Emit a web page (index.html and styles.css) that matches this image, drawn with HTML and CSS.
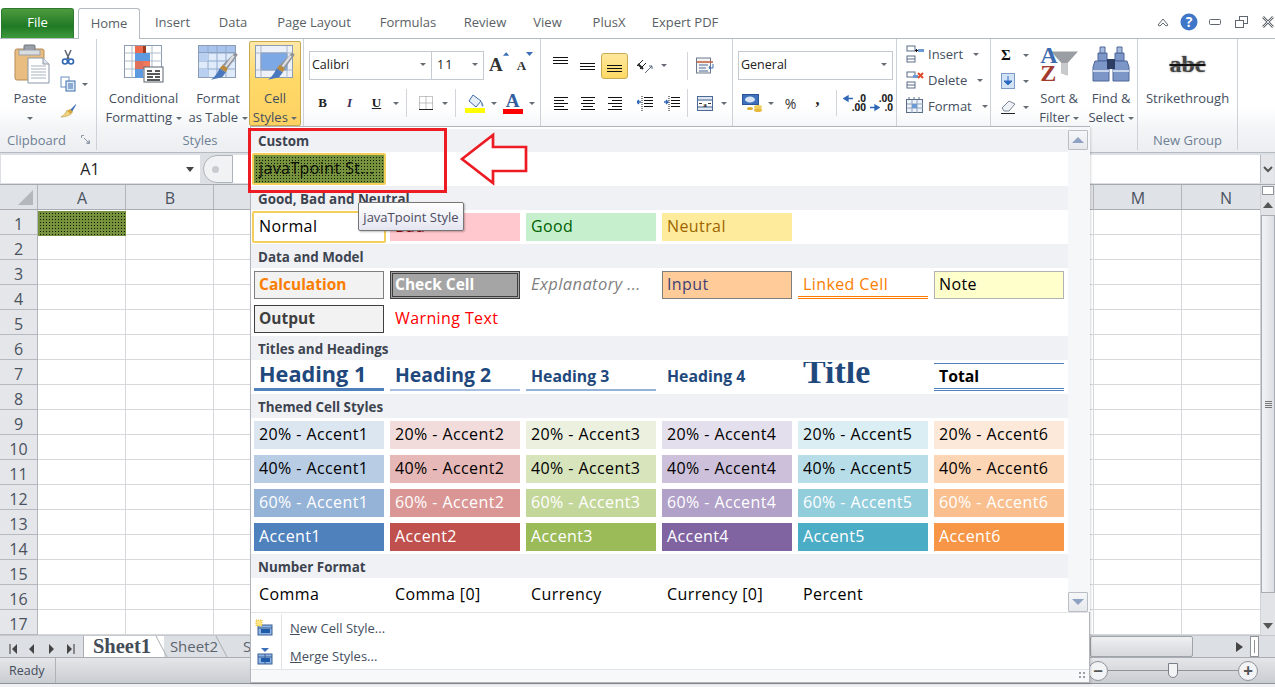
FILE: index.html
```html
<!DOCTYPE html>
<html lang="en">
<head>
<meta charset="utf-8">
<title>Cell Styles</title>
<link rel="stylesheet" href="styles.css">
</head>
<body>
<svg class="defs" width="0" height="0" aria-hidden="true">
  <symbol id="brush" viewBox="0 0 24 24">
    <path d="M21 1l2 2-8 11-4-3z" fill="#8f949b"/>
    <path d="M19 3l1.5 1.5L14 13l-1.5-1z" fill="#d9dce0"/>
    <path d="M11 11l4 3-1.5 3-5-3z" fill="#b98a3c"/>
    <path d="M8.500 14l5 3-3 4-9 2c3-2 5-5 7-9z" fill="#4a78bd"/>
  </symbol>
  <symbol id="sml-grid" viewBox="0 0 18 18">
    <rect x="1" y="1" width="8" height="5" fill="#fff" stroke="#5b6d85"/>
    <rect x="1" y="11" width="8" height="6" fill="#fff" stroke="#5b6d85"/>
    <path d="M1 14h8" stroke="#5b6d85"/>
  </symbol>
</svg>

<div class="tabs">
  <div class="file-tab">File</div>
  <div class="tab tab-on">Home</div>
  <div class="tab t-insert">Insert</div>
  <div class="tab t-data">Data</div>
  <div class="tab t-page">Page Layout</div>
  <div class="tab t-form">Formulas</div>
  <div class="tab t-rev">Review</div>
  <div class="tab t-view">View</div>
  <div class="tab t-plus">PlusX</div>
  <div class="tab t-pdf">Expert PDF</div>
  <div class="win-ctl">
    <svg class="wc-a" width="14" height="12" viewBox="0 0 14 12"><path d="M2 9l5-6 5 6-2 1-3-3-3 3z" fill="#fff" stroke="#5f6670"/></svg>
    <svg class="wc-b" width="18" height="18" viewBox="0 0 18 18"><circle cx="9" cy="9" r="8.500" fill="#3f76c8"/><text x="9" y="14" text-anchor="middle" class="help-q">?</text></svg>
    <svg class="wc-c" width="13" height="8" viewBox="0 0 13 8"><rect x=".5" y="1.500" width="11" height="5" rx="1" fill="#fff" stroke="#5f6670"/></svg>
    <svg class="wc-d" width="13" height="13" viewBox="0 0 13 13"><rect x="4.500" y=".5" width="8" height="7" fill="#fff" stroke="#5f6670"/><rect x=".5" y="4.500" width="8" height="7" fill="#fff" stroke="#5f6670"/></svg>
    <svg class="wc-e" width="12" height="12" viewBox="0 0 12 12"><path d="M1 1l10 10M11 1L1 11" stroke="#5f6670" stroke-width="2.500"/><path d="M1 1l10 10M11 1L1 11" stroke="#fff" stroke-width=".8"/></svg>
  </div>
</div>

<div class="ribbon">
  <section class="group g-clip">
    <div class="group-body clip-body">
      <div class="big-btn paste">
        <svg class="big-ico" width="36" height="40" viewBox="0 0 36 40">
          <rect x="1" y="5" width="29" height="31" rx="2" fill="#e9bd7f" stroke="#b58b55"/>
          <rect x="10" y="1" width="11" height="8" rx="1" fill="#9aa0a8" stroke="#6d737b"/>
          <rect x="5" y="6" width="21" height="5" fill="#d9dde2" stroke="#9aa0a8"/>
          <path d="M14 14h15l6 6v19H14z" fill="#fff" stroke="#8b97a6"/>
          <path d="M29 14v6h6" fill="#dfe5ec" stroke="#8b97a6"/>
          <path d="M17 22h15M17 25h15M17 28h15M17 31h15M17 34h15" stroke="#a9b3bf"/>
        </svg>
        <div class="big-lbl">Paste</div>
        <div class="big-lbl"><i class="ar"></i></div>
      </div>
      <div class="clip-tools">
        <svg width="16" height="16" viewBox="0 0 16 16"><path d="M5 1l4 9M11 1L7 10" stroke="#5c6470" stroke-width="1.500"/><circle cx="5" cy="12.500" r="2.500" fill="none" stroke="#2f67b5" stroke-width="1.600"/><circle cx="11" cy="12.500" r="2.500" fill="none" stroke="#2f67b5" stroke-width="1.600"/></svg>
        <div class="clip-row"><svg width="16" height="16" viewBox="0 0 16 16"><rect x="1" y="1" width="8" height="10" fill="#fff" stroke="#6d8fbf"/><rect x="6" y="5" width="9" height="10" fill="#dce9f7" stroke="#3d6cab"/><path d="M8 8h5M8 10h5M8 12h5" stroke="#3d6cab"/></svg><i class="ar"></i></div>
        <svg width="17" height="15" viewBox="0 0 17 15"><path d="M16 1l-6 6 2 2 4-7z" fill="#3f6fb5"/><path d="M10 6l3 3-2 2-4-3z" fill="#d8a53a"/><path d="M7 7l4 4c-3 2-6 3-10 3 3-2 5-4 6-7z" fill="#f0d27a" stroke="#a98a3a" stroke-width=".5"/></svg>
      </div>
    </div>
    <div class="group-label clip-label">Clipboard<svg class="launch" width="9" height="9" viewBox="0 0 9 9"><path d="M.5 3V.5H3M8.500 6v2.500H6M3 3l5 5M5 8h3V5" fill="none" stroke="#8d98a6"/></svg></div>
  </section>

  <section class="group g-styles">
    <div class="group-body styles-body">
      <div class="big-btn cf">
        <svg class="big-ico" width="40" height="38" viewBox="0 0 40 38">
          <rect x=".5" y=".5" width="37" height="32" fill="#fff" stroke="#8c9cb3"/>
          <path d="M8 1v32M19 1v32M28 1v32M1 8h37M1 16h37M1 24h37" stroke="#aebbcb"/>
          <rect x="11" y="1" width="8" height="8" fill="#ee6a4c"/><rect x="19" y="1" width="3" height="8" fill="#9c3b22"/>
          <rect x="11" y="8" width="15" height="8" fill="#5e9ae0"/><rect x="11" y="16" width="8" height="8" fill="#5e9ae0"/>
          <rect x="11" y="16" width="15" height="8" fill="#ee6a4c" opacity=".9"/><rect x="11" y="24" width="8" height="9" fill="#5e9ae0"/>
          <rect x="20" y="22" width="19" height="15" fill="#fff" stroke="#5b6472"/>
          <path d="M23 26h5M31 26h5M23 29h13M23 32h6M31 32h5M23 35h13" stroke="#222" stroke-width="1.300"/>
        </svg>
        <div class="big-lbl">Conditional</div>
        <div class="big-lbl">Formatting <i class="ar"></i></div>
      </div>
      <div class="big-btn fat">
        <svg class="big-ico" width="40" height="38" viewBox="0 0 40 38">
          <rect x=".5" y=".5" width="37" height="32" fill="#dfeafb" stroke="#8c9cb3"/>
          <rect x=".5" y=".5" width="37" height="7" fill="#a9c4ec" stroke="#8c9cb3"/>
          <path d="M10 1v32M19 1v32M28 1v32M1 8h37M1 16h37M1 24h37" stroke="#8fa9cb"/>
          <rect x="1" y="8" width="9" height="8" fill="#b9d0f0"/><rect x="1" y="24" width="9" height="8" fill="#b9d0f0"/>
          <use href="#brush" x="11" y="6" width="30" height="30"/>
        </svg>
        <div class="big-lbl">Format</div>
        <div class="big-lbl">as Table <i class="ar"></i></div>
      </div>
      <div class="big-btn cs">
        <svg class="big-ico" width="40" height="38" viewBox="0 0 40 38">
          <rect x=".5" y=".5" width="37" height="32" fill="#eef2f8" stroke="#8c9cb3"/>
          <rect x="6" y="8" width="26" height="17" fill="#7da8e6" stroke="#4f7fc2"/>
          <path d="M6 1v32M32 1v32M1 8h37M1 25h37" stroke="#a9b7c9"/>
          <use href="#brush" x="11" y="6" width="30" height="30"/>
        </svg>
        <div class="big-lbl">Cell</div>
        <div class="big-lbl">Styles <i class="ar"></i></div>
      </div>
    </div>
    <div class="group-label">Styles</div>
  </section>

  <section class="group g-font">
    <div class="group-body col-body">
      <div class="row row-top">
        <div class="combo c-font">Calibri<i class="ar"></i></div>
        <div class="combo c-size">11<i class="ar"></i></div>
      </div>
      <div class="row row-bot">
        <div class="ib"><b class="sf">B</b></div>
        <div class="ib"><i class="sf it">I</i></div>
        <div class="ib"><u class="sf ul">U</u></div>
        <div class="arw"><i class="ar"></i></div>
        <span class="sep"></span>
        <div class="ib"><svg width="14" height="14" viewBox="0 0 14 14"><path d="M.5.5h13v13H.5zM7 .5v13M.5 7h13" fill="none" stroke="#8a8a8a" stroke-dasharray="1 1"/><path d="M0 13.500h14" stroke="#222"/></svg></div>
        <div class="arw"><i class="ar"></i></div>
        <span class="sep"></span>
        <div class="ib"><svg width="20" height="19" viewBox="0 0 20 19"><path d="M8 1l8 6-5 6-7-6z" fill="#e8eef7" stroke="#3e6ba8"/><path d="M16 7c2 2 3 4 2 6-2-1-2-4-2-6z" fill="#6f8fc0"/><rect y="14" width="20" height="5" fill="#ffff00"/></svg></div>
        <div class="arw"><i class="ar"></i></div>
        <div class="ib col-a"><b class="sf a-blue">A</b><span class="bar-red"></span></div>
        <div class="arw"><i class="ar"></i></div>
      </div>
      <div class="grow-btns">
        <div class="grow"><b class="sf grow-b">A</b><svg width="7" height="4" viewBox="0 0 7 4"><path d="M0 4l3.500-4L7 4z" fill="#3a6fb5"/></svg></div>
        <div class="grow"><b class="sf grow-s">A</b><svg width="7" height="4" viewBox="0 0 7 4"><path d="M0 0l3.500 4L7 0z" fill="#3a6fb5"/></svg></div>
      </div>
    </div>
    <div class="group-label"></div>
  </section>

  <section class="group g-align">
    <div class="group-body col-body">
      <div class="row row-top2">
        <div class="ib al-top"><span class="lines l-s"></span></div>
        <div class="ib al-mid"><span class="lines l-s"></span></div>
        <div class="ib ib-on al-bot"><span class="lines l-s"></span></div>
        <div class="ib m3"><svg width="20" height="20" viewBox="0 0 20 20"><g fill="none" stroke="#222"><path d="M2 10l6-6M5 13l6-6"/><path d="M3 8l5 5" stroke-width="2"/></g><path d="M10 17l7-7M14 10h3v3" fill="none" stroke="#5a6a80"/></svg></div>
        <div class="arw"><i class="ar"></i></div>
        <span class="sep s-r1"></span>
        <div class="ib"><svg width="18" height="17" viewBox="0 0 18 17"><rect x=".5" y="1" width="14" height="15" fill="#f3f3f3" stroke="#6d7a8c"/><path d="M1 5h16" stroke="#c05a34" stroke-width="1.500"/><path d="M3 8h9M3 11h7M3 14h9" stroke="#4d6a96"/><path d="M17 7v4h-4m1-2l-1 2 2 1" fill="none" stroke="#3a6fb5"/></svg></div>
      </div>
      <div class="row row-bot2">
        <div class="ib"><span class="lines l-left"></span></div>
        <div class="ib"><span class="lines l-center"></span></div>
        <div class="ib"><span class="lines l-right"></span></div>
        <div class="ib m3"><svg width="16" height="15" viewBox="0 0 16 15"><path d="M7 1.500h9M7 4.500h9M7 7.500h9M7 10.500h9" stroke="#111"/><path d="M5 .0v15" stroke="#111" stroke-dasharray="1 1"/><path d="M4 6H0m2-2L0 6l2 2" fill="none" stroke="#2f67b5" stroke-width="1.400"/></svg></div>
        <div class="ib"><svg width="16" height="15" viewBox="0 0 16 15"><path d="M7 1.500h9M7 4.500h9M7 7.500h9M7 10.500h9" stroke="#111"/><path d="M5 .0v15" stroke="#111" stroke-dasharray="1 1"/><path d="M0 6h4M2 4l2 2-2 2" fill="none" stroke="#2f67b5" stroke-width="1.400"/></svg></div>
        <span class="sep s-r2"></span>
        <div class="ib"><svg width="16" height="15" viewBox="0 0 16 15"><rect x=".5" y=".5" width="15" height="14" fill="#dfe7f2" stroke="#4d6a96"/><path d="M1 4h14M1 11h14" stroke="#4d6a96"/><rect x="1" y="5" width="14" height="5" fill="#fff"/><text x="8" y="10.500" text-anchor="middle" class="merge-t">a</text><path d="M2 7.500h3M14 7.500h-3" stroke="#333"/></svg></div>
        <div class="arw"><i class="ar"></i></div>
      </div>
    </div>
    <div class="group-label"></div>
  </section>

  <section class="group g-num">
    <div class="group-body col-body">
      <div class="row row-top">
        <div class="combo c-num">General<i class="ar"></i></div>
      </div>
      <div class="row row-bot num-row">
        <div class="ib w28"><svg width="20" height="18" viewBox="0 0 20 18"><rect x=".5" y=".5" width="16" height="10" fill="#3f70bc" stroke="#2c5597"/><ellipse cx="8" cy="5.500" rx="5" ry="3" fill="#d6e4f6"/><ellipse cx="16" cy="16" rx="4" ry="2" fill="#e7b83c"/><ellipse cx="16" cy="13" rx="4" ry="2" fill="#f0cc58"/><ellipse cx="8" cy="14.500" rx="3" ry="1.500" fill="#dcae34"/></svg></div>
        <div class="arw a10"><i class="ar"></i></div>
        <div class="ib num-first"><span class="sym">%</span></div>
        <div class="ib"><b class="sym comma">,</b></div>
        <span class="sep s-n"></span>
        <div class="ib"><span class="dec"><svg width="10" height="9" viewBox="0 0 10 9"><path d="M10 4.500H3M5 2L1 4.500 5 7z" fill="#2f67b5" stroke="#2f67b5" stroke-width="1.300"/></svg><b>.0</b><b class="dec-w">.00</b></span></div>
        <div class="ib"><span class="dec"><b class="dec-w">.00</b><svg width="10" height="9" viewBox="0 0 10 9"><path d="M0 4.500h7M5 2l4 2.500L5 7z" fill="#2f67b5" stroke="#2f67b5" stroke-width="1.300"/></svg><b>.0</b></span></div>
      </div>
    </div>
    <div class="group-label"></div>
  </section>

  <section class="group g-cells">
    <div class="group-body cells-body">
      <div class="cell-cmd">
        <svg width="18" height="18" viewBox="0 0 18 18"><use href="#sml-grid"/><rect x="12" y="4" width="6" height="3" fill="#6c9ad4"/><path d="M9 5.500h3M10.500 4v3" stroke="#111"/></svg>
        <span>Insert</span><i class="ar"></i>
      </div>
      <div class="cell-cmd">
        <svg width="18" height="18" viewBox="0 0 18 18"><use href="#sml-grid"/><rect x="7" y="4" width="5" height="3" fill="#6c9ad4"/><path d="M12 2l5 5M17 2l-5 5" stroke="#e04a2a" stroke-width="2"/></svg>
        <span>Delete</span><i class="ar"></i>
      </div>
      <div class="cell-cmd">
        <svg width="18" height="18" viewBox="0 0 18 18"><rect x=".5" y="2.500" width="16" height="13" fill="#eef3fa" stroke="#5b6d85"/><path d="M6 3v13M11 3v13M1 7h16M1 11h16" stroke="#8da2bd"/><rect x="6" y="7" width="5" height="4" fill="#6c9ad4"/><path d="M3 0v3M8 0v3M13 0v3" stroke="#5b6d85"/></svg>
        <span>Format</span><i class="ar"></i>
      </div>
    </div>
    <div class="group-label"></div>
  </section>

  <section class="group g-edit">
    <div class="group-body edit-body">
      <div class="edit-tools">
        <div class="edit-row"><b class="sigma">Σ</b><i class="ar"></i></div>
        <div class="edit-row"><svg width="14" height="16" viewBox="0 0 14 16"><rect x=".5" y=".5" width="13" height="15" fill="#d3e3f6" stroke="#7d9cc6"/><path d="M7 3v8M3 8l4 4 4-4z" fill="#2f6bc0" stroke="#2f6bc0"/></svg><i class="ar"></i></div>
        <div class="edit-row"><svg width="15" height="14" viewBox="0 0 15 14"><path d="M1 8l7-7 6 3-6 7H3z" fill="#eef2f6" stroke="#7b8794"/><path d="M0 13.500h14" stroke="#222"/></svg><i class="ar"></i></div>
      </div>
      <div class="big-btn sort">
        <div class="sort-ico">
          <svg class="funnel" width="27" height="26" viewBox="0 0 26 24"><path d="M0 0h26L16 11v12l-6-2V11z" fill="#9a9da1"/><path d="M10 11h6v12l-6-2z" fill="#c8cacc"/></svg>
          <b class="az-a">A</b><b class="az-z">Z</b>
        </div>
        <div class="big-lbl">Sort &amp;</div>
        <div class="big-lbl">Filter <i class="ar"></i></div>
      </div>
      <div class="big-btn find">
        <svg class="big-ico" width="38" height="38" viewBox="0 0 38 38">
          <g fill="#7c96c8" stroke="#4e6797">
            <path d="M6 8h9v8H6zM23 8h9v8h-9z"/>
            <path d="M3 16h14v20H1V22zM21 16h14l2 6v14H21z"/>
          </g>
          <path d="M8 2h5v6H8zM25 2h5v6h-5z" fill="#a7bbe0" stroke="#4e6797"/>
          <rect x="15" y="14" width="8" height="10" fill="#2d3d63"/>
          <path d="M1 26h16M21 26h16" stroke="#c9d6ec" stroke-width="2"/>
        </svg>
        <div class="big-lbl">Find &amp;</div>
        <div class="big-lbl">Select <i class="ar"></i></div>
      </div>
    </div>
    <div class="group-label"></div>
  </section>

  <section class="group g-new">
    <div class="group-body new-body">
      <div class="abc">abc</div>
      <div class="big-lbl">Strikethrough</div>
    </div>
    <div class="group-label">New Group</div>
  </section>
</div>

<div class="formula">
  <div class="namebox">A1<i class="ar ar-big"></i></div>
  <div class="fx-pill"><span></span></div>
  <div class="fx-input"></div>
  <div class="fx-exp"><svg width="10" height="7" viewBox="0 0 10 7"><path d="M1 1l4 4 4-4" fill="none" stroke="#555" stroke-width="2"/></svg></div>
</div>

<div class="sheet">
  <div class="sheet-main">
    <div class="col-heads">
      <div class="corner"><span></span></div>
      <div class="ch">A</div><div class="ch">B</div><div class="ch">C</div><div class="ch">D</div><div class="ch">E</div><div class="ch">F</div><div class="ch">G</div><div class="ch">H</div><div class="ch">I</div><div class="ch">J</div><div class="ch">K</div><div class="ch">L</div><div class="ch">M</div><div class="ch">N</div>
    </div>
    <div class="grid-wrap">
      <div class="row-heads">
        <div>1</div><div>2</div><div>3</div><div>4</div><div>5</div><div>6</div><div>7</div><div>8</div><div>9</div><div>10</div><div>11</div><div>12</div><div>13</div><div>14</div><div>15</div><div>16</div><div>17</div>
      </div>
      <div class="cells"><div class="a1 dots"></div></div>
    </div>
  </div>
  <div class="vscroll">
    <div class="split-v"></div>
    <div class="vs-up"><i></i></div>
    <div class="vs-thumb"><span></span></div>
    <div class="vs-down"><i></i></div>
  </div>
</div>

<div class="sheetbar">
  <div class="nav">
    <svg width="70" height="12" viewBox="0 0 70 12"><path d="M1 1v10" stroke="#333"/><path d="M8 1v10L3 6zM25 1v10l-5-5zM40 1v10l5-5zM58 1v10l5-5z" fill="#444"/><path d="M65 1v10" stroke="#333"/></svg>
  </div>
  <div class="stab stab-on">Sheet1</div>
  <div class="stab">Sheet2</div>
  <div class="stab stab-3">Sheet3</div>
  <div class="hs-space"></div>
  <div class="hs-thumb"></div>
  <div class="hs-right"><i></i></div>
  <div class="hs-split"><span></span></div>
</div>

<div class="status">
  <div class="ready">Ready</div>
  <div class="zoom">
    <span class="zbtn">&minus;</span>
    <div class="ztrack"><span class="zthumb"></span></div>
    <span class="zbtn">+</span>
  </div>
</div>
<div class="win-bottom"></div>

<div class="menu">
  <div class="menu-top">
    <div class="gallery">
      <div class="sec-head sec-first">Custom</div>
      <div class="sec"><div class="st st-sel dots">javaTpoint St...</div></div>

      <div class="sec-head">Good, Bad and Neutral</div>
      <div class="sec">
        <div class="st st-sel st-normal">Normal</div>
        <div class="st bad">Bad</div>
        <div class="st good">Good</div>
        <div class="st neutral">Neutral</div>
      </div>

      <div class="sec-head">Data and Model</div>
      <div class="sec">
        <div class="st calc">Calculation</div>
        <div class="st check">Check Cell</div>
        <div class="st expl">Explanatory ...</div>
        <div class="st input">Input</div>
        <div class="st linked">Linked Cell</div>
        <div class="st note">Note</div>
        <div class="st output">Output</div>
        <div class="st warn">Warning Text</div>
      </div>

      <div class="sec-head">Titles and Headings</div>
      <div class="sec">
        <div class="st h1">Heading 1</div>
        <div class="st h2">Heading 2</div>
        <div class="st h3">Heading 3</div>
        <div class="st h4">Heading 4</div>
        <div class="st title">Title</div>
        <div class="st total">Total</div>
      </div>

      <div class="sec-head">Themed Cell Styles</div>
      <div class="sec">
        <div class="st a21">20% - Accent1</div><div class="st a22">20% - Accent2</div><div class="st a23">20% - Accent3</div><div class="st a24">20% - Accent4</div><div class="st a25">20% - Accent5</div><div class="st a26">20% - Accent6</div>
        <div class="st a41">40% - Accent1</div><div class="st a42">40% - Accent2</div><div class="st a43">40% - Accent3</div><div class="st a44">40% - Accent4</div><div class="st a45">40% - Accent5</div><div class="st a46">40% - Accent6</div>
        <div class="st a61">60% - Accent1</div><div class="st a62">60% - Accent2</div><div class="st a63">60% - Accent3</div><div class="st a64">60% - Accent4</div><div class="st a65">60% - Accent5</div><div class="st a66">60% - Accent6</div>
        <div class="st ac1">Accent1</div><div class="st ac2">Accent2</div><div class="st ac3">Accent3</div><div class="st ac4">Accent4</div><div class="st ac5">Accent5</div><div class="st ac6">Accent6</div>
      </div>

      <div class="sec-head">Number Format</div>
      <div class="sec">
        <div class="st">Comma</div>
        <div class="st">Comma [0]</div>
        <div class="st">Currency</div>
        <div class="st">Currency [0]</div>
        <div class="st">Percent</div>
      </div>
    </div>
    <div class="gal-scroll">
      <div class="gal-btn"><i class="tri-up"></i></div>
      <div class="gal-btn"><i class="tri-down"></i></div>
    </div>
  </div>
  <div class="menu-items">
    <div class="mi">
      <span class="mi-ico"><svg width="18" height="18" viewBox="0 0 18 18"><rect x="3" y="6" width="14" height="10" fill="#8eb4e3" stroke="#3b5f96"/><path d="M3 9h14" stroke="#3b5f96"/><rect x="6" y="10" width="9" height="4" fill="#1f5ba8"/><rect x="1" y="1" width="6" height="6" fill="#ffe680" stroke="#e0b93a" stroke-dasharray="1 1"/></svg></span>
      <span class="mi-txt"><u>N</u>ew Cell Style...</span>
    </div>
    <div class="mi">
      <span class="mi-ico"><svg width="18" height="18" viewBox="0 0 18 18"><rect x="3" y="7" width="14" height="10" fill="#8eb4e3" stroke="#3b5f96"/><path d="M3 10h14M10 7v10" stroke="#3b5f96"/><rect x="6" y="11" width="9" height="4" fill="#1f5ba8"/><path d="M6 1h8l-4 4z" fill="#3b6fb8"/></svg></span>
      <span class="mi-txt"><u>M</u>erge Styles...</span>
    </div>
  </div>
  <div class="menu-grip"><i></i></div>

  <div class="tooltip">javaTpoint Style</div>
  <div class="redbox"></div>
  <svg class="redarrow" width="70" height="54" viewBox="0 0 70 54"><path d="M3 27L34 3v12h33v24H34v12z" fill="#fff" stroke="#ed1c24" stroke-width="2.700"/></svg>
</div>
</body>
</html>
```
FILE: styles.css
```css
* { box-sizing: border-box; }
html, body { margin: 0; height: 687px; width: 1275px; overflow: hidden; }
body { position: relative; background: #fff; font-family: "Open Sans", "Noto Sans", sans-serif; font-size: 13px; color: #444e5e; display: flex; flex-direction: column; }
.defs { position: absolute; }
i.ar { display: inline-block; width: 0; height: 0; border: 3px solid transparent; border-top: 3.500px solid #666c74; border-bottom: 0; vertical-align: middle; }
.dots { background-color: #76923c; background-image: linear-gradient(90deg, #76923c 2px, transparent 2px), linear-gradient(#76923c 2px, transparent 2px); background-size: 3px 3px; }
.a1.dots { background-color: #10160a; }
.st.dots { background-color: #10160a; color: #0b1006; }

/* tabs */
.tabs { height: 39px; flex: none; display: flex; align-items: flex-end; position: relative; padding-left: 1px; border-bottom: 1px solid #b6bbc2; font-size: 13px; color: #5a5f66; }
.file-tab { width: 73px; height: 30px; background: linear-gradient(#4e9a3e, #1f7a25 60%, #3f9a3c); border: 1px solid #2c7a2e; border-bottom: 0; border-radius: 3px 3px 0 0; color: #fff; text-align: center; line-height: 26px; }
.tab { height: 30px; line-height: 28px; text-align: center; flex: none; }
.tab-on { width: 62px; margin-left: 4px; margin-bottom: -1px; height: 31px; background: #fff; border: 1px solid #b6bbc2; border-bottom: 0; border-radius: 3px 3px 0 0; }
.t-insert { width: 65px; }
.t-data { width: 56px; }
.t-page { width: 106px; }
.t-form { width: 82px; }
.t-rev { width: 72px; }
.t-view { width: 53px; }
.t-plus { width: 70px; }
.t-pdf { width: 82px; }
.win-ctl { margin-left: auto; height: 38px; display: flex; align-items: center; padding: 6px 1px 0 0; }
.wc-b { margin-left: 10px; }
.wc-c { margin-left: 11px; }
.wc-d { margin-left: 13px; }
.wc-e { margin-left: 14px; }
.help-q { font: bold 14px "Open Sans", sans-serif; fill: #fff; }

/* ribbon */
.ribbon { height: 113px; flex: none; display: flex; background: linear-gradient(#fff 60%, #f3f4f6 80%, #eceef1); }
.group { display: flex; flex-direction: column; border-right: 1px solid #cdd2d8; margin-bottom: 2px; flex: none; }
.group-body { height: 90px; flex: none; }
.group-label { height: 21px; text-align: center; color: #6e7f95; font-size: 13px; line-height: 22px; position: relative; }
.clip-label { text-align: left; padding-left: 7px; }
.launch { position: absolute; left: 81px; top: 6px; }
.g-clip { width: 97px; }
.g-styles { width: 207px; }
.g-font { width: 237px; position: relative; }
.g-align { width: 192px; }
.g-num { width: 164px; }
.g-cells { width: 94px; }
.g-edit { width: 147px; }
.g-new { width: 100px; }

.big-btn { display: flex; flex-direction: column; align-items: center; color: #444e5e; }
.big-ico { flex: none; margin-top: 6px; margin-bottom: 6px; height: 38px; }
.big-lbl { height: 19px; line-height: 19px; white-space: nowrap; }
.clip-body { display: flex; }
.paste { width: 60px; }
.paste .big-ico { margin-top: 5px; height: 40px; margin-bottom: 5px; margin-left: 3px; }
.clip-tools { display: flex; flex-direction: column; gap: 11px; padding-top: 10px; }
.clip-tools > svg { display: block; }
.clip-row { display: flex; align-items: center; gap: 6px; }
.styles-body { display: flex; padding-left: 3px; }
.cf { width: 87px; }
.fat { width: 62px; }
.cs { width: 52px; height: 85px; margin-top: 2px; background: linear-gradient(#ffe9a8, #ffd968 45%, #fcd163); border: 1px solid #c9a94f; border-radius: 2px; }
.cs .big-ico { margin-top: 3px; margin-bottom: 6px; }

.col-body { display: flex; flex-direction: column; padding-left: 5px; position: relative; }
.row { display: flex; align-items: center; }
.row-top { margin-top: 12px; height: 29px; }
.row-bot { margin-top: 8px; height: 30px; }
.row-top2 { margin-top: 13px; height: 27px; padding-left: 1px; }
.row-bot2 { margin-top: 9px; height: 30px; padding-left: 1px; }
.combo { height: 29px; border: 1px solid #c5cad1; background: #fff; display: flex; align-items: center; justify-content: space-between; padding: 0 5px 2px 2px; color: #222; font-size: 12.500px; }
.c-font { width: 123px; }
.c-size { width: 52px; border-left: 0; padding-left: 5px; letter-spacing: 1px; }
.c-num { width: 155px; }
.ib { width: 27px; height: 26px; display: flex; align-items: center; justify-content: center; flex: none; position: relative; }
.arw { width: 11px; display: flex; justify-content: center; flex: none; }
.a10 { width: 10px; }
.sep { width: 1px; height: 28px; background: #d2d6db; margin: 0 5px; flex: none; }
.m3 { margin-left: 3px; }
.s-r1 { margin: 0 3px 0 18px; }
.s-r2 { margin: 0 3px 0 2px; }
.s-n { margin: 0 4px 0 5px; height: 26px; }
.w28 { width: 28px; }
.num-first { margin-left: 1px; }
.sf { font: bold 13px "Liberation Serif", serif; color: #222; }
.it { font-style: italic; font-weight: bold; color: #43305a; }
.ul { text-decoration: underline; }
.col-a { flex-direction: column; }
.a-blue { color: #2f5d9e; font-size: 19px; line-height: 16px; }
.bar-red { width: 20px; height: 5px; background: #f00; }
.grow-btns { position: absolute; left: 185px; top: 13px; display: flex; gap: 6px; align-items: flex-start; }
.grow { display: flex; width: 20px; align-items: flex-start; justify-content: center; height: 26px; }
.grow-b { font-size: 19px; line-height: 26px; color: #333; }
.grow-s { font-size: 13px; line-height: 28px; color: #333; }
.lines { display: block; width: 14px; height: 9px; background: repeating-linear-gradient(#111 0 1px, transparent 1px 3px); }
.l-s { height: 8px; background: repeating-linear-gradient(#111 0 1px, transparent 1px 3px); width: 15px; }
.al-top { align-items: flex-start; padding-top: 4px; }
.al-mid { padding-top: 3px; }
.al-bot { align-items: flex-end; padding-bottom: 5px; }
.ib-on { background: linear-gradient(#ffe89e, #ffd964); border: 1px solid #c9a94f; border-radius: 3px; }
.l-left, .l-center, .l-right { width: 14px; height: 13px; background-image: linear-gradient(#111 1px, transparent 1px), linear-gradient(#111 1px, transparent 1px); background-repeat: repeat-y; background-size: 14px 6px, 10px 6px; background-position: 0 0, 0 3px; }
.l-center { background-position: 0 0, 2px 3px; }
.l-right { background-position: 0 0, 4px 3px; }
.sym { font-size: 14px; color: #333; }
.comma { font: bold 16px "Liberation Serif", serif; line-height: 10px; margin-top: -6px; color: #222; }
.dec { display: grid; grid-template-columns: 11px 12px; font-size: 10px; line-height: 9px; color: #222; text-align: right; align-items: center; }
.dec-w { grid-column: 1 / 3; }
.merge-t { font: bold 7px "Liberation Serif", serif; fill: #222; }

.cells-body { padding: 2px 0 0 9px; }
.cell-cmd { display: flex; align-items: center; height: 26px; gap: 4px; white-space: nowrap; }
.cell-cmd i.ar { margin-left: 6px; }
.edit-body { display: flex; }
.edit-tools { width: 46px; padding: 3px 0 0 10px; display: flex; flex-direction: column; }
.edit-row { height: 26px; display: flex; align-items: center; justify-content: space-between; width: 28px; }
.sigma { font: bold 15px "Liberation Serif", serif; color: #111; }
.sort { width: 47px; }
.find { width: 53px; margin-left: 3px; }
.sort-ico { position: relative; width: 42px; height: 38px; margin: 7px 0 5px; flex: none; }
.az-a, .az-z { position: absolute; left: 2px; font: bold 24px/18px "Liberation Serif", serif; }
.az-a { top: 0; color: #3c6bb0; }
.az-z { top: 18px; color: #a33a30; }
.funnel { position: absolute; left: 13px; top: 5px; }
.new-body { display: flex; flex-direction: column; align-items: center; padding-top: 13px; }
.abc { height: 25px; margin-bottom: 12px; font: bold 24px/24px "Liberation Serif", serif; color: #444; text-decoration: line-through; text-decoration-color: #111; text-shadow: 0 0 2px #888; }

/* formula bar */
.formula { height: 33px; flex: none; display: flex; background: #dcdfe3; padding: 2px 1px 1px; border-top: 1px solid #b6bbc2; border-bottom: 1px solid #a6abb2; }
.namebox { width: 199px; background: #fff; text-align: center; color: #222; font-size: 16px; line-height: 29px; position: relative; padding-right: 21px; }
.ar-big { position: absolute; right: 6px; top: 12px; border-width: 5px 4.500px 0 !important; border-top-color: #444 !important; }
.fx-pill { width: 30px; background: #f1f2f4; border: 1px solid #aeb3ba; border-radius: 14px 0 0 14px; margin: 0 0 0 3px; display: flex; align-items: center; padding-left: 8px; }
.fx-pill span { width: 7px; height: 7px; border-radius: 50%; background: #c8cbd0; }
.fx-input { flex: 1; background: #fff; }
.fx-exp { width: 14px; background: #e4e6e9; display: flex; align-items: center; justify-content: center; border-left: 1px solid #b6bbc2; }

/* sheet */
.sheet { height: 450px; flex: none; display: flex; }
.sheet-main { width: 1260px; overflow: hidden; display: flex; flex-direction: column; }
.col-heads { height: 25px; flex: none; display: flex; background: #dfe2e6; border-bottom: 1px solid #a9adb3; }
.corner { width: 38px; flex: none; border-right: 1px solid #b2b6bc; position: relative; display: flex; justify-content: flex-end; align-items: flex-end; padding: 0 4px 4px 0; }
.corner span { border-style: solid; border-width: 0 0 15px 15px; border-color: transparent transparent #b4b7bb; }
.ch { width: 88px; flex: none; text-align: center; border-right: 1px solid #b2b6bc; font-size: 16px; line-height: 26px; color: #4a5260; padding-left: 1px; }
.grid-wrap { display: flex; flex: 1; }
.row-heads { width: 38px; flex: none; background: #e4e6e9; border-right: 1px solid #b2b6bc; }
.row-heads div { height: 25px; text-align: center; font-size: 16px; line-height: 28px; color: #4a5260; border-bottom: 1px solid #b6bac0; }
.cells { flex: 1; display: flow-root; background-image: linear-gradient(#d6d8db 1px, transparent 1px), linear-gradient(90deg, #d6d8db 1px, transparent 1px); background-size: 88px 25px; background-position: 0 -1px, -1px 0; }
.a1 { width: 88px; height: 25px; margin-top: 1px; }
.vscroll { flex: 1; background: #e1e3e7; display: flex; flex-direction: column; border-left: 1px solid #cfd2d6; }
.split-v { height: 9px; margin: 1px 1px 0; background: #fff; border: 1px solid #8f949b; }
.vs-up { height: 20px; display: flex; align-items: center; justify-content: center; }
.vs-up i { border: 5px solid transparent; border-bottom: 6px solid #555; border-top: 0; }
.vs-thumb { height: 378px; border: 1px solid #a9adb3; background: linear-gradient(90deg, #f2f3f5, #dcdfe3); display: flex; align-items: center; justify-content: center; }
.vs-thumb span { width: 7px; height: 7px; background: repeating-linear-gradient(#777 0 1px, transparent 1px 2px); }
.vs-down { flex: 1; display: flex; align-items: flex-end; justify-content: center; padding-bottom: 6px; }
.vs-down i { border: 5px solid transparent; border-top: 6px solid #555; border-bottom: 0; }

.sheetbar { height: 23px; flex: none; display: flex; background: #dcdfe3; border-top: 1px solid #c5c8cd; border-bottom: 1px solid #a9adb3; align-items: stretch; padding-right: 16px; }
.nav { width: 84px; padding: 5px 0 0 9px; border-right: 1px solid #a9adb3; flex: none; }
.stab { width: 60px; flex: none; text-align: center; font-size: 15px; line-height: 21px; color: #5c6470; position: relative; }
.stab::after { content: ""; position: absolute; right: 2px; top: 0; bottom: 0; border-right: 1px solid #a9adb3; transform: skewX(28deg); }
.stab-on { width: 80px; background: #fff; font: bold 20.500px/21px "Liberation Serif", serif; color: #444c58; padding-right: 4px; }
.stab-3 { margin-left: 13px; }
.hs-space { flex: 1; }
.hs-thumb { width: 103px; background: linear-gradient(#eef0f2, #d5d8dc); border: 1px solid #9fa4ab; border-radius: 2px; }
.hs-right { width: 57px; display: flex; align-items: center; justify-content: flex-end; padding-right: 7px; }
.hs-right i { border: 5px solid transparent; border-left: 7px solid #444; border-right: 0; }
.hs-split { width: 9px; background: #fff; border: 1px solid #8f949b; display: flex; justify-content: center; align-items: center; }
.hs-split span { width: 1px; height: 13px; background: #8f949b; }

.status { height: 26px; flex: none; display: flex; align-items: center; justify-content: space-between; background: linear-gradient(#e4e6e9, #c9ccd1); border-bottom: 1px solid #8f949b; }
.ready { width: 56px; padding-left: 9px; border-right: 1px solid #aeb3ba; height: 100%; line-height: 26px; font-size: 12.500px; color: #444e5e; }
.zoom { display: flex; align-items: center; width: 170px; margin-right: 17px; }
.zbtn { width: 20px; height: 20px; border: 1px solid #8f949b; border-radius: 50%; background: #f2f3f5; text-align: center; line-height: 17px; font-size: 17px; font-weight: bold; color: #555; flex: none; }
.ztrack { flex: 1; height: 1px; background: #8f949b; position: relative; display: flex; justify-content: center; }
.zthumb { width: 10px; height: 15px; margin-top: -7px; background: #f2f3f5; border: 1px solid #7b8088; border-radius: 0 0 5px 5px; }
.win-bottom { flex: 1; background: #f0f1f3; }

/* cell styles menu */
.menu { position: absolute; left: 250px; top: 126px; width: 840px; height: 557px; background: #fff; border: 1px solid #b2b6bc; box-shadow: 1px 1px 2px rgba(0,0,0,.15); display: flex; flex-direction: column; }
.menu-top { display: flex; height: 485px; flex: none; }
.gallery { width: 817px; flex: none; padding-top: 2px; }
.sec-head { height: 24px; background: #f0f1f5; font-weight: bold; font-size: 13.400px; line-height: 26px; padding-left: 7px; color: #3d4450; }
.sec-first { height: 23px; line-height: 24px; }
.sec { display: grid; grid-template-columns: repeat(6, 130px); column-gap: 6px; row-gap: 6px; padding: 3px 3px; background: #fff; min-height: 34px; }
.st { height: 28px; font-size: 16px; letter-spacing: .4px; line-height: 27px; padding-left: 5px; color: #000; white-space: nowrap; overflow: hidden; }
.st-sel { margin: -2px -2px; height: 32px; width: 134px; border: 2px solid #f5cf5c; border-radius: 2px; padding-left: 5px; line-height: 27px; }
.st-normal { background: #fff; }
.bad { background: #ffc7ce; color: #9c0006; }
.good { background: #c6efce; color: #006100; }
.neutral { background: #ffeb9c; color: #9c6500; }
.calc { background: #f2f2f2; border: 1px solid #7f7f7f; color: #fa7d00; font-weight: bold; font-size: 15.500px; letter-spacing: 0; padding-left: 4px; line-height: 24px; }
.check { background: #a5a5a5; border: 3px double #3f3f3f; color: #fff; font-weight: bold; font-size: 15.500px; letter-spacing: 0; padding-left: 2px; line-height: 21px; }
.expl { color: #7f7f7f; font-style: italic; font-size: 16.500px; line-height: 25px; }
.input { background: #fc9; border: 1px solid #7f7f7f; color: #3f3f76; padding-left: 4px; line-height: 24px; }
.linked { color: #fa7d00; border-bottom: 3px double #fa7d00; height: 28px; line-height: 26px; }
.note { background: #ffc; border: 1px solid #b2b2b2; padding-left: 4px; line-height: 24px; }
.output { background: #f2f2f2; border: 1px solid #3f3f3f; color: #3f3f3f; font-weight: bold; font-size: 15.500px; letter-spacing: 0; padding-left: 4px; line-height: 24px; }
.warn { color: #f00; }
.h1, .h2, .h3, .h4, .title { color: #1f497d; font-weight: bold; letter-spacing: 0; }
.h1 { font-size: 21.700px; border-bottom: 3px solid #4f81bd; line-height: 22px; overflow: visible; }
.h2 { font-size: 19.400px; border-bottom: 2px solid #a7bfde; line-height: 24px; overflow: visible; }
.h3 { font-size: 15.800px; border-bottom: 2px solid #95b3d7; line-height: 27px; }
.h4 { font-size: 15.800px; line-height: 27px; }
.title { font: bold 34px/20px "Liberation Serif", serif; padding-left: 5px; color: #1f497d; margin-top: -1px; height: 29px; }
.total { border-top: 1px solid #4f81bd; border-bottom: 3px double #4f81bd; font-weight: bold; font-size: 15.800px; letter-spacing: 0; line-height: 25px; }
.a21 { background: #dce6f1; } .a22 { background: #f2dcdb; } .a23 { background: #ebf1de; } .a24 { background: #e4dfec; } .a25 { background: #daeef3; } .a26 { background: #fde9d9; }
.a41 { background: #b8cce4; } .a42 { background: #e6b8b7; } .a43 { background: #d8e4bc; } .a44 { background: #ccc0da; } .a45 { background: #b7dee8; } .a46 { background: #fcd5b4; }
.a61, .a62, .a63, .a64, .a65, .a66, .ac1, .ac2, .ac3, .ac4, .ac5, .ac6 { color: #fff; }
.a61 { background: #95b3d7; } .a62 { background: #da9694; } .a63 { background: #c4d79b; } .a64 { background: #b1a0c7; } .a65 { background: #92cddc; } .a66 { background: #fabf8f; }
.ac1 { background: #4f81bd; } .ac2 { background: #c0504d; } .ac3 { background: #9bbb59; } .ac4 { background: #8064a2; } .ac5 { background: #4bacc6; } .ac6 { background: #f79646; }
.gal-scroll { flex: 1; background: #f6f7f8; display: flex; flex-direction: column; justify-content: space-between; align-items: flex-end; padding: 3px 2px 0 0; }
.gal-btn { width: 20px; height: 20px; border: 1px solid #b9bec5; background: linear-gradient(#f6f7f9, #e6e8ec); display: flex; align-items: center; justify-content: center; border-radius: 1px; }
.tri-up { border: 6px solid transparent; border-bottom: 6px solid #8fa2c4; border-top: 0; }
.tri-down { border: 6px solid transparent; border-top: 6px solid #8fa2c4; border-bottom: 0; }
.menu-items { height: 58px; flex: none; border-top: 1px solid #e2e4e8; border-bottom: 1px solid #e2e4e8; padding-top: 1px; }
.mi { height: 28px; display: flex; align-items: center; color: #444e5e; }
.mi-ico { width: 31px; height: 28px; border-right: 1px solid #e2e4e8; display: flex; align-items: center; justify-content: center; flex: none; padding-right: 4px; }
.mi-txt { padding-left: 8px; }
.menu-grip { flex: 1; background: #f7f8f9; position: relative; }
.menu-grip i { position: absolute; right: 2px; bottom: 2px; width: 9px; height: 9px; background: radial-gradient(circle, #9aa0a8 1px, transparent 1.200px) 0 0 / 4px 4px; }
.tooltip { position: absolute; left: 107px; top: 75px; width: 106px; height: 29px; border: 1px solid #767676; border-radius: 2px; background: linear-gradient(#fff, #e4e5f0); color: #4c4c5e; font-size: 13px; line-height: 28px; text-align: center; box-shadow: 1px 1px 2px rgba(0,0,0,.25); }
.redbox { position: absolute; left: -3px; top: 1px; width: 199px; height: 65px; border: 3px solid #ed1c24; }
.redarrow { position: absolute; left: 208px; top: 5px; }
```
